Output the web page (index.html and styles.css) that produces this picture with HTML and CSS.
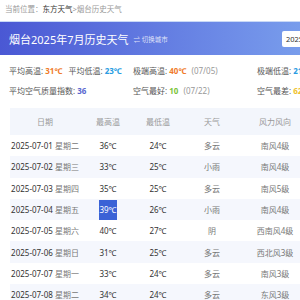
FILE: index.html
```html
<!DOCTYPE html>
<html lang="zh-CN">
<head>
    <meta charset="UTF-8">
    <title>烟台2025年7月历史天气</title>
    <link rel="stylesheet" href="styles.css">
</head>
<body>
    <div class="page">
        <div class="crumb">当前位置：<a href="#">东方天气</a>&gt;烟台历史天气</div>

        <div class="banner">
            <h1>烟台2025年7月历史天气</h1>
            <span class="switch">⇌ 切换城市</span>
            <div class="month-box">2025年7月</div>
        </div>

        <div class="stats">
            <div class="stat">平均高温: <b class="warm">31℃</b><span class="gap"></span>平均低温: <b class="cool">23℃</b></div>
            <div class="stat">极端高温: <b class="warm">40℃</b> <span class="when">(07/05)</span></div>
            <div class="stat">极端低温: <b class="cool">21℃</b> <span class="when">(07/26)</span></div>
            <div class="stat">平均空气质量指数: <b class="aqi">36</b></div>
            <div class="stat">空气最好: <b class="good">10</b> <span class="when">(07/22)</span></div>
            <div class="stat">空气最差: <b class="bad">62</b> <span class="when">(07/05)</span></div>
        </div>

        <table class="history">
            <thead>
                <tr>
                    <th class="c-date">日期</th>
                    <th class="c-high">最高温</th>
                    <th class="c-low">最低温</th>
                    <th class="c-wea">天气</th>
                    <th class="c-wind">风力风向</th>
                </tr>
            </thead>
            <tbody>
                <tr><td>2025-07-01 <span class="wk">星期二</span></td><td>36℃</td><td>24℃</td><td class="soft">多云</td><td class="soft">南风4级</td></tr>
                <tr><td>2025-07-02 <span class="wk">星期三</span></td><td>33℃</td><td>25℃</td><td class="soft">小雨</td><td class="soft">南风4级</td></tr>
                <tr><td>2025-07-03 <span class="wk">星期四</span></td><td>35℃</td><td>25℃</td><td class="soft">多云</td><td class="soft">南风5级</td></tr>
                <tr><td>2025-07-04 <span class="wk">星期五</span></td><td><span class="hot">39℃</span></td><td>26℃</td><td class="soft">小雨</td><td class="soft">南风4级</td></tr>
                <tr><td>2025-07-05 <span class="wk">星期六</span></td><td>40℃</td><td>27℃</td><td class="soft">阴</td><td class="soft">西南风4级</td></tr>
                <tr><td>2025-07-06 <span class="wk">星期日</span></td><td>31℃</td><td>25℃</td><td class="soft">多云</td><td class="soft">西北风3级</td></tr>
                <tr><td>2025-07-07 <span class="wk">星期一</span></td><td>33℃</td><td>24℃</td><td class="soft">多云</td><td class="soft">南风3级</td></tr>
                <tr><td>2025-07-08 <span class="wk">星期二</span></td><td>34℃</td><td>24℃</td><td class="soft">多云</td><td class="soft">东风3级</td></tr>
            </tbody>
        </table>
    </div>
</body>
</html>
```

FILE: styles.css
```css
body {
    margin: 0;
    padding: 0;
    font-family: "Noto Sans", "Noto Sans CJK SC", sans-serif;
    color: #333;
    background-color: #fff;
    overflow: hidden;
}

.page {
    width: 340px;
}

.crumb {
    height: 21px;
    line-height: 18px;
    padding-left: 5px;
    font-size: 7.5px;
    color: #999;
}

.crumb a {
    color: #333;
    text-decoration: none;
}

.banner {
    height: 34px;
    display: flex;
    align-items: center;
    padding: 0 9px;
    background: linear-gradient(90deg, #4a58d4, #6f8ee8 70%, #7ea6ee);
    border-top: 1px solid #c9d9f6;
    box-sizing: border-box;
}

.banner h1 {
    margin: 0;
    font-size: 11px;
    font-weight: normal;
    color: #fff;
}

.switch {
    margin-left: 5px;
    font-size: 6.5px;
    color: rgba(255, 255, 255, 0.8);
}

.month-box {
    margin-left: auto;
    width: 49px;
    height: 16px;
    line-height: 16px;
    padding-left: 4px;
    box-sizing: border-box;
    background-color: #fff;
    border-radius: 2px;
    font-size: 7.5px;
    color: #333;
}

.stats {
    display: grid;
    grid-template-columns: repeat(3, 124px);
    padding: 6px 9px 0;
    font-size: 8px;
    line-height: 20px;
    color: #555;
}

.stat b {
    font-weight: bold;
}

.gap {
    display: inline-block;
    width: 6px;
}

.warm { color: #f07b2a; }
.cool { color: #2a9ce2; }
.aqi { color: #5a66cf; }
.good { color: #7bc43a; }
.bad { color: #efc22f; }

.when {
    margin-left: 3px;
    color: #999;
}

.history {
    margin: 7px 0 0 10px;
    border-collapse: collapse;
    table-layout: fixed;
    font-size: 8px;
}

.history th {
    height: 27px;
    padding: 0;
    font-weight: normal;
    color: #999;
    background-color: #f3f6fc;
}

.c-date { width: 70px; }
.c-high { width: 56px; }
.c-low { width: 44px; }
.c-wea { width: 64px; }
.c-wind { width: 62px; }

.history td {
    height: 21.3px;
    padding: 0;
    text-align: center;
    white-space: nowrap;
    color: #333;
}

.history tbody tr:nth-child(even) td {
    background-color: #f5f7fd;
}

.history td.soft,
.wk {
    color: #777;
}

.hot {
    display: inline-block;
    line-height: 20px;
    background-color: #3b62d6;
    color: #fff;
}
```
